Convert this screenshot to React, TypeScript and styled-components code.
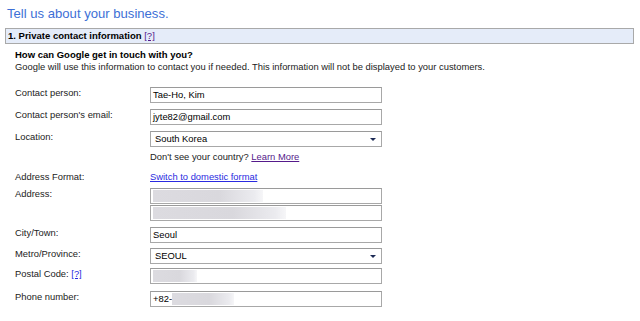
import React from "react";
import styled, { createGlobalStyle } from "styled-components";

const Global = createGlobalStyle`
  html, body { margin: 0; padding: 0; background: #fff; }
  body { font-family: "Liberation Sans", Arial, sans-serif; color: #222; }
`;

const Page = styled.div`
  width: 640px;
  height: 321px;
  overflow: hidden;
  padding: 5px 6px 0 5px;
  box-sizing: border-box;
`;

const Title = styled.h1`
  margin: 0 0 0 2px;
  font-weight: normal;
  font-size: 13.1px;
  line-height: 17px;
  color: #3d6fd6;
`;

const SectionBar = styled.div`
  margin-top: 6px;
  height: 16px;
  box-sizing: border-box;
  border: 1px solid #a9a9a9;
  background: #e5ecf9;
  padding-left: 2px;
  font-size: 9.5px;
  line-height: 14px;
  color: #000;
`;

const BarTitle = styled.span`
  font-weight: bold;
`;

const Link = styled.a<{ $visited?: boolean }>`
  color: ${(p) => (p.$visited ? "#551a8b" : "#2a2ae0")};
  text-decoration: underline;
  cursor: pointer;
  font-weight: normal;
`;

const Intro = styled.div`
  margin-top: 5px;
  padding-left: 10px;
  font-size: 9.4px;
  line-height: 12px;
`;

const Question = styled.div`
  font-weight: bold;
  font-size: 9.5px;
  color: #000;
`;

const Form = styled.div`
  padding-left: 10px;
  display: flex;
  flex-direction: column;
`;

const Row = styled.div<{ $mt: number }>`
  display: grid;
  grid-template-columns: 135px 232px;
  align-items: start;
  margin-top: ${(p) => p.$mt}px;
  font-size: 9.4px;
`;

const Label = styled.div`
  line-height: 11px;
  color: #222;
`;

const Field = styled.div`
  display: flex;
  flex-direction: column;
  gap: 1px;
`;

const TextBox = styled.div`
  height: 16px;
  box-sizing: border-box;
  border: 1px solid #a8a8a8;
  border-top-color: #9a9a9a;
  background: #fff;
  padding-left: 2px;
  line-height: 14px;
  font-size: 9.4px;
  color: #000;
  display: flex;
  align-items: center;
  white-space: nowrap;
`;

const SelectBox = styled(TextBox)`
  padding-left: 4px;
  justify-content: space-between;
  padding-right: 5px;
`;

const Arrow = styled.span`
  width: 0;
  height: 0;
  border-left: 3px solid transparent;
  border-right: 3px solid transparent;
  border-top: 3px solid #1c2a55;
  margin-top: 1px;
`;

const Blur = styled.span<{ $w: number }>`
  display: inline-block;
  width: ${(p) => p.$w}px;
  height: 12px;
  background: linear-gradient(90deg, #dcdbe0 0%, #d9d8dd 60%, #ebebef 92%, #f6f6f8 100%);
  filter: blur(0.6px);
`;

const Note = styled.div`
  line-height: 12px;
  font-size: 9.4px;
  color: #222;
`;

export default function App() {
  return (
    <>
      <Global />
      <Page>
        <Title>Tell us about your business.</Title>
        <SectionBar>
          <BarTitle>1. Private contact information</BarTitle> <Link $visited>[?]</Link>
        </SectionBar>
        <Intro>
          <Question>How can Google get in touch with you?</Question>
          <div>
            Google will use this information to contact you if needed. This information will not be displayed to your customers.
          </div>
        </Intro>
        <Form>
          <Row $mt={14}>
            <Label>Contact person:</Label>
            <Field>
              <TextBox>Tae-Ho, Kim</TextBox>
            </Field>
          </Row>
          <Row $mt={6}>
            <Label>Contact person's email:</Label>
            <Field>
              <TextBox>jyte82@gmail.com</TextBox>
            </Field>
          </Row>
          <Row $mt={6}>
            <Label>Location:</Label>
            <Field>
              <SelectBox>
                South Korea
                <Arrow />
              </SelectBox>
            </Field>
          </Row>
          <Row $mt={4}>
            <span />
            <Note>
              Don't see your country? <Link $visited>Learn More</Link>
            </Note>
          </Row>
          <Row $mt={8}>
            <Label>Address Format:</Label>
            <Note>
              <Link>Switch to domestic format</Link>
            </Note>
          </Row>
          <Row $mt={5}>
            <Label>Address:</Label>
            <Field>
              <TextBox>
                <Blur $w={110} />
              </TextBox>
              <TextBox>
                <Blur $w={133} />
              </TextBox>
            </Field>
          </Row>
          <Row $mt={6}>
            <Label>City/Town:</Label>
            <Field>
              <TextBox>Seoul</TextBox>
            </Field>
          </Row>
          <Row $mt={5}>
            <Label>Metro/Province:</Label>
            <Field>
              <SelectBox>
                SEOUL
                <Arrow />
              </SelectBox>
            </Field>
          </Row>
          <Row $mt={4}>
            <Label>
              Postal Code: <Link>[?]</Link>
            </Label>
            <Field>
              <TextBox>
                <Blur $w={44} />
              </TextBox>
            </Field>
          </Row>
          <Row $mt={7}>
            <Label>Phone number:</Label>
            <Field>
              <TextBox>
                +82-
                <Blur $w={62} />
              </TextBox>
            </Field>
          </Row>
        </Form>
      </Page>
    </>
  );
}
